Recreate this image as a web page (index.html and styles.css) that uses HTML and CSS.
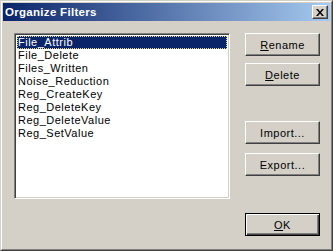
FILE: index.html
```html
<!DOCTYPE html>
<html>
<head>
    <title>Organize Filters</title>
    <link rel="stylesheet" href="styles.css">
</head>
<body>
    <div class="window">
        <div class="frame">
            <div class="titlebar">
                <span class="title">Organize Filters</span>
                <button class="close" title="Close">
                    <svg width="8" height="7" viewBox="0 0 8 7">
                        <path d="M0 0h2l2 2.5 2-2.5h2l-3 3.5 3 3.5h-2l-2-2.5-2 2.5h-2l3-3.5z" fill="#000"/>
                    </svg>
                </button>
            </div>
            <div class="content">
                <div class="listbox">
                    <div class="item selected">File_Attrib</div>
                    <div class="item">File_Delete</div>
                    <div class="item">Files_Written</div>
                    <div class="item">Noise_Reduction</div>
                    <div class="item">Reg_CreateKey</div>
                    <div class="item">Reg_DeleteKey</div>
                    <div class="item">Reg_DeleteValue</div>
                    <div class="item">Reg_SetValue</div>
                </div>
                <div class="buttons">
                    <button class="btn"><u>R</u>ename</button>
                    <button class="btn btn-delete"><u>D</u>elete</button>
                    <button class="btn btn-import">Import...</button>
                    <button class="btn btn-export">Export...</button>
                    <button class="btn btn-ok"><u>O</u>K</button>
                </div>
            </div>
        </div>
    </div>
</body>
</html>
```

FILE: styles.css
```css
* { box-sizing: border-box; }
body { margin: 0; background: #d4d0c8; font-family: "Liberation Sans", Arial, sans-serif; font-size: 11px; }
.window { width: 333px; height: 251px; border: 1px solid; border-color: #d4d0c8 #404040 #404040 #d4d0c8; }
.frame { height: 100%; border: 1px solid; border-color: #fff #808080 #808080 #fff; padding: 1px; background: #d4d0c8; }
.titlebar { height: 18px; display: flex; align-items: center; justify-content: space-between; padding: 0 2px 0 2px;
    background: linear-gradient(to right, #0a246a, #a6caf0); }
.title { color: #fff; font-weight: bold; font-size: 11.5px; letter-spacing: 0.3px; }
.close { width: 16px; height: 14px; padding: 0; margin: 0; display: flex; align-items: center; justify-content: center;
    background: #d4d0c8; border: 1px solid; border-color: #fff #404040 #404040 #fff; box-shadow: inset -1px -1px 0 #808080; }
.content { display: flex; padding: 12px 0 0 11px; gap: 15px; }
.listbox { width: 216px; height: 166px; background: #fff; border: 1px solid; border-color: #808080 #fff #fff #808080;
    box-shadow: inset 1px 1px 0 #404040, inset -1px -1px 0 #d4d0c8; padding: 2px; }
.item { height: 13px; line-height: 13px; padding-left: 1px; color: #000; white-space: nowrap; letter-spacing: 0.5px; }
.item.selected { background: #0a246a; color: #fff; outline: 1px dotted #e6d98c; outline-offset: -1px; }
.buttons { display: flex; flex-direction: column; }
.btn { width: 75px; height: 23px; padding: 0; margin: 0; font-family: inherit; font-size: 11px; letter-spacing: 0.5px; color: #000;
    background: #d4d0c8; border: 1px solid; border-color: #fff #404040 #404040 #fff; box-shadow: inset -1px -1px 0 #808080; }
.btn u { text-decoration: underline; }
.btn-delete { margin-top: 7px; }
.btn-import { margin-top: 35px; }
.btn-export { margin-top: 9px; }
.btn-ok { margin-top: 37px; border: 1px solid #000; box-shadow: inset 1px 1px 0 #fff, inset -1px -1px 0 #404040, inset -2px -2px 0 #808080; }
```
